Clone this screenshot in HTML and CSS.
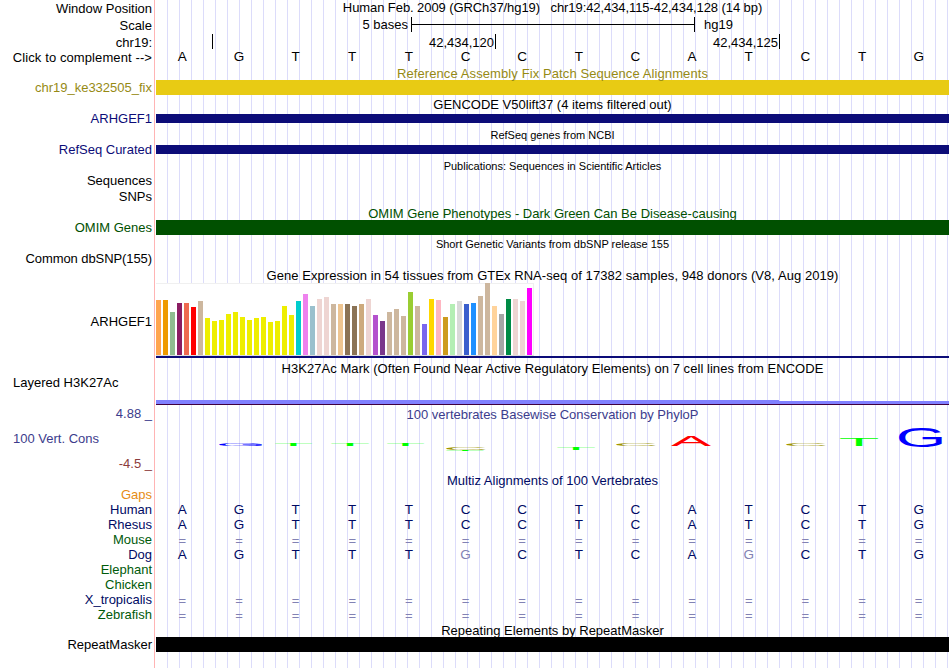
FILE: index.html
```
<!DOCTYPE html>
<html lang="en">
<head>
    <meta charset="UTF-8">
    <title>chr19:42,434,115-42,434,128</title>
    <link rel="stylesheet" href="styles.css">
</head>
<body>
    <div class="browser">
        <div class="labels">
            <div class="label">Window Position</div>
            <div class="label gap-2">Scale</div>
            <div class="label gap-2">chr19:</div>
            <div class="label loose">Click to complement --&gt;</div>
            <div class="label gap-15 patch">chr19_ke332505_fix</div>
            <div class="label gap-16 gene">ARHGEF1</div>
            <div class="label gap-16 gene">RefSeq Curated</div>
            <div class="label gap-16">Sequences</div>
            <div class="label gap-1">SNPs</div>
            <div class="label gap-16 omim">OMIM Genes</div>
            <div class="label gap-16 tight">Common dbSNP(155)</div>
            <div class="label gap-gtex">ARHGEF1</div>
            <div class="label gap-h3k left">Layered H3K27Ac</div>
            <div class="label gap-16 cons">4.88 _</div>
            <div class="label gap-10 cons left">100 Vert. Cons</div>
            <div class="label gap-10 cons-min">-4.5 _</div>
            <div class="label gap-16 gaps">Gaps</div>
            <div class="label species">Human</div>
            <div class="label species">Rhesus</div>
            <div class="label species-alt">Mouse</div>
            <div class="label species">Dog</div>
            <div class="label species-alt">Elephant</div>
            <div class="label species-alt">Chicken</div>
            <div class="label species">X_tropicalis</div>
            <div class="label species-alt">Zebrafish</div>
            <div class="label gap-15">RepeatMasker</div>
        </div>

        <div class="tracks">
            <div class="position tight">Human Feb. 2009 (GRCh37/hg19)   chr19:42,434,115-42,434,128 (14 bp)</div>
            <div class="scale">
                <span class="scale-text">5 bases</span>
                <span class="scale-bar"><span class="scale-line"></span></span>
                <span class="scale-db">hg19</span>
            </div>
            <div class="ruler">
                <div class="tick first"></div>
                <div class="tick">42,434,120</div>
                <div class="tick last">42,434,125</div>
            </div>
            <div class="bases ruler-bases" data-seq="AGTTTCCTCATCTG"></div>

            <div class="title title-14 patch loose">Reference Assembly Fix Patch Sequence Alignments</div>
            <div class="bar bar-patch"></div>

            <div class="title title-19">GENCODE V50lift37 (4 items filtered out)</div>
            <div class="bar bar-gene"></div>

            <div class="title title-22 small">RefSeq genes from NCBI</div>
            <div class="bar bar-gene"></div>

            <div class="title title-pubs small">Publications: Sequences in Scientific Articles</div>

            <div class="title title-14 omim">OMIM Gene Phenotypes - Dark Green Can Be Disease-causing</div>
            <div class="bar bar-omim"></div>

            <div class="title title-snp small">Short Genetic Variants from dbSNP release 155</div>

            <div class="title title-15 wider">Gene Expression in 54 tissues from GTEx RNA-seq of 17382 samples, 948 donors (V8, Aug 2019)</div>
            <div class="gtex" id="gtex"></div>
            <div class="gtex-line"></div>

            <div class="title title-h3k wider">H3K27Ac Mark (Often Found Near Active Regulatory Elements) on 7 cell lines from ENCODE</div>
            <div class="h3k"><div class="h3k-high"></div><div class="h3k-low"></div></div>

            <div class="title title-cons cons">100 vertebrates Basewise Conservation by PhyloP</div>
            <svg class="logo" id="logo" width="793" height="50"></svg>

            <div class="title title-multiz species">Multiz Alignments of 100 Vertebrates</div>
            <div class="bases species" data-seq="AGTTTCCTCATCTG"></div>
            <div class="bases species" data-seq="AGTTTCCTCATCTG"></div>
            <div class="bases species" data-seq="=============="></div>
            <div class="bases species" data-seq="AGTTTgCTCAgCTG"></div>
            <div class="bases"></div>
            <div class="bases"></div>
            <div class="bases species" data-seq="=============="></div>
            <div class="bases species" data-seq="=============="></div>

            <div class="title title-repeat">Repeating Elements by RepeatMasker</div>
            <div class="bar bar-repeat"></div>
        </div>
    </div>
    <script src="script.js"></script>
</body>
</html>
```

FILE: styles.css
```
body {
    margin: 0;
    background: #fff;
    color: #000;
    font-family: "Liberation Sans", Arial, sans-serif;
    font-size: 13px;
    line-height: 15px;
}

.browser {
    display: flex;
    width: 949px;
    height: 668px;
    overflow: hidden;
}

/* left column */
.labels {
    width: 154px;
    padding-top: 1px;
    box-sizing: border-box;
}
.label {
    height: 15px;
    padding-right: 2px;
    text-align: right;
    white-space: pre;
}
.label.left {
    text-align: left;
    padding-left: 13px;
}
.gap-1 { margin-top: 1px; }
.gap-2 { margin-top: 2px; }
.gap-10 { margin-top: 10px; }
.gap-15 { margin-top: 15px; }
.gap-16 { margin-top: 16px; }
.gap-gtex { margin-top: 48px; }
.gap-h3k { margin-top: 46px; }

.tight { letter-spacing: -0.08px; }
.wider { letter-spacing: 0.05px; }
.loose { letter-spacing: 0.1px; }

/* track colours */
.patch { color: #968a14; }
.gene { color: #0c0c78; }
.omim { color: #005000; }
.cons { color: #3c3c8c; }
.cons-min { color: #8c3c3c; }
.gaps { color: #e68c14; }
.species { color: #000a64; }
.species-alt { color: #005a0a; }

/* right column with guide lines */
.tracks {
    width: 793px;
    height: 668px;
    padding-left: 1px;
    border-left: 1px solid #ffb4b4;
    background: repeating-linear-gradient(to right, transparent 0, transparent 11px, #dcdcfa 11px, #dcdcfa 12px) 1px 0 no-repeat;
}

.position {
    height: 17px;
    text-align: center;
    white-space: pre;
}

.scale {
    display: flex;
    height: 17px;
}
.scale-text {
    width: 252px;
    margin-right: 3px;
    text-align: right;
}
.scale-bar {
    display: flex;
    align-items: center;
    width: 282px;
    height: 15px;
    border-left: 1px solid #000;
    border-right: 1px solid #000;
}
.scale-line {
    flex: 1;
    height: 1px;
    background: #000;
}
.scale-db {
    margin-left: 9px;
}

.ruler {
    display: flex;
    height: 15px;
}
.tick {
    box-sizing: border-box;
    width: 283px;
    height: 15px;
    padding-top: 1px;
    padding-right: 1px;
    border-right: 1px solid #000;
    text-align: right;
}
.tick.first { width: 57px; }
.tick.last { width: 284px; }

.bases {
    display: grid;
    grid-template-columns: repeat(14, 1fr);
    width: 793px;
    height: 15px;
    margin-left: -2px;
    font-size: 13.5px;
    text-align: center;
}
.ruler-bases { height: 17px; }
.bases .dim { color: #8282b4; }
.bases .eq {
    padding-top: 1px;
    font-size: 13px;
}

.title {
    box-sizing: border-box;
    text-align: center;
    white-space: nowrap;
}
.small { font-size: 11px; }
.title-14 { height: 14px; }
.title-15 { height: 15px; }
.title-19 { height: 19px; padding-top: 2px; }
.title-22 { height: 22px; padding-top: 5px; }
.title-pubs { height: 52px; padding-top: 5px; }
.title-snp { height: 33px; padding-top: 2px; }
.title-h3k { height: 42px; padding-top: 3px; }
.title-cons { height: 17px; padding-top: 2px; }
.title-multiz { height: 30px; padding-top: 1px; }
.title-repeat { height: 15px; padding-top: 1px; }

.bar { height: 15px; }
.bar-patch { background: #e8cb14; }
.bar-gene { height: 9px; background: #0c0c78; }
.bar-omim { background: #005000; }
.bar-repeat { background: #000; }

/* GTEx chart */
.gtex {
    box-sizing: border-box;
    display: flex;
    align-items: flex-end;
    gap: 2px;
    width: 378px;
    height: 73px;
    background: #fff;
    border-right: 1px solid #f0f0f0;
    border-bottom: 1px solid #dcdcdc;
    box-shadow: inset 0 1px #f0f0f0;
}
.gtex-bar { width: 5px; }
.gtex-line {
    height: 2px;
    background: #0c0c78;
}

.h3k {
    display: flex;
    align-items: flex-end;
    height: 4px;
    border-bottom: 1px solid #400040;
}
.h3k-high {
    width: 623px;
    height: 4px;
    background: #8080ff;
}
.h3k-low {
    flex: 1;
    height: 3px;
    background: #8080ff;
}

.logo {
    display: block;
    font-size: 100px;
}
```

FILE: script.js
```
// base rows, lower case = mismatch
document.querySelectorAll('.bases[data-seq]').forEach(row => {
    for (const c of row.dataset.seq) {
        const cell = document.createElement('span');
        cell.textContent = c.toUpperCase();
        if (c === '=') cell.className = 'dim eq';
        else if (c === 'g') cell.className = 'dim';
        row.appendChild(cell);
    }
});

// [height, color] per tissue
const tissues = [
    [55, '#ffa54f'], [55, '#ee9a00'], [43, '#8fbc8f'], [52, '#8b1c62'], [52, '#ee6a50'], [48, '#ff0000'], [54, '#cdb79e'],
    [37, '#eeee00'], [34, '#eeee00'], [35, '#eeee00'], [41, '#eeee00'], [43, '#eeee00'], [38, '#eeee00'], [35, '#eeee00'],
    [37, '#eeee00'], [38, '#eeee00'], [33, '#eeee00'], [34, '#eeee00'], [49, '#eeee00'], [40, '#eeee00'],
    [54, '#00cdcd'], [61, '#ee82ee'], [49, '#9ac0cd'], [56, '#eed5d2'], [58, '#eed5d2'], [51, '#cdb79e'], [51, '#eec591'],
    [51, '#8b7355'], [49, '#8b7355'], [51, '#cdaa7d'], [56, '#eed5d2'], [40, '#b452cd'], [34, '#7a378b'],
    [43, '#cdb79e'], [46, '#cdb79e'], [39, '#cdb79e'], [63, '#9acd32'], [49, '#cdb79e'], [31, '#7a67ee'],
    [56, '#ffd700'], [55, '#ffb6c1'], [38, '#cd9b1d'], [51, '#b4eeb4'], [54, '#d9d9d9'], [51, '#3a5fcd'], [52, '#1e90ff'],
    [59, '#cdb79e'], [72, '#cdb79e'], [49, '#ffd39b'], [41, '#a6a6a6'], [56, '#008b45'], [56, '#eed5d2'], [54, '#eed5d2'],
    [67, '#ff00ff']
];
const gtex = document.getElementById('gtex');
tissues.forEach(([height, color]) => {
    const bar = document.createElement('div');
    bar.className = 'gtex-bar';
    bar.style.height = height + 'px';
    bar.style.background = color;
    gtex.appendChild(bar);
});

// conservation logo: letter, left, right, top, bottom
const letters = [
    ['G', 63, 106, 21, 24], ['T', 119, 156, 22.4, 24.4], ['T', 175, 213, 22.4, 24.4], ['T', 231, 268, 22.4, 24.4],
    ['C', 290, 330, 25, 28], ['T', 290, 328, 28, 29], ['T', 401, 439, 25.2, 28.2], ['C', 460, 500, 21, 24],
    ['A', 515, 555, 13.3, 24], ['C', 630, 670, 21, 24], ['T', 684, 722, 16.3, 24.3], ['G', 743, 786, 5.3, 25]
];
const ink = { G: [5, 71], T: [2, 59], A: [0, 66.5], C: [5, 69] };
const fills = { G: '#0000ff', T: '#00ff00', A: '#ff0000', C: '#a09600' };
const logo = document.getElementById('logo');
letters.forEach(([c, left, right, top, bottom]) => {
    const text = document.createElementNS('http://www.w3.org/2000/svg', 'text');
    const sx = (right - left) / (ink[c][1] - ink[c][0]);
    const sy = (bottom - top) / 70;
    text.setAttribute('transform', `translate(${left - ink[c][0] * sx} ${bottom}) scale(${sx} ${sy})`);
    text.setAttribute('fill', fills[c]);
    text.textContent = c;
    logo.appendChild(text);
});
```
